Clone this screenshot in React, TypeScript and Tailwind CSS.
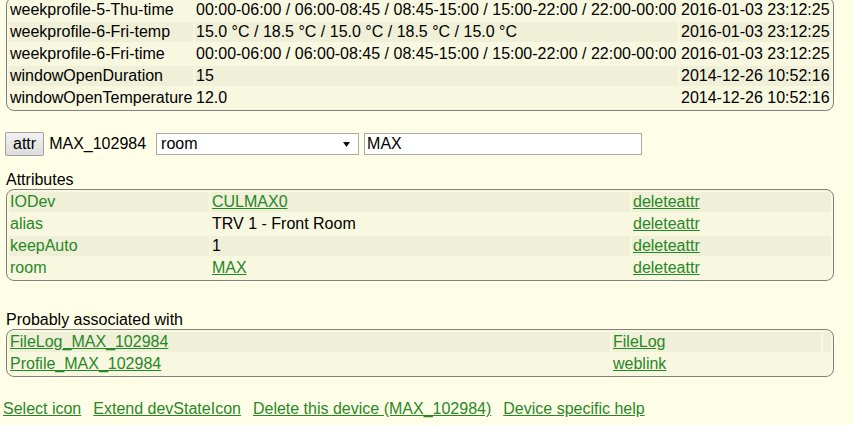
import React from "react";

const font = { fontFamily: '"Liberation Sans", Arial, sans-serif' };

type Cell = { text: string; kind?: "plain" | "link" | "name" };

function Block({
  widths,
  rows,
  darkFirst = true,
}: {
  widths: string[];
  rows: Cell[][];
  darkFirst?: boolean;
}) {
  return (
    <table className="w-[828px] table-fixed border-separate border-spacing-[2px] border border-[#808080] rounded-[8px] bg-[#F8F8E0]">
      <colgroup>
        {widths.map((w, i) => (
          <col key={i} className={w} />
        ))}
      </colgroup>
      <tbody>
        {rows.map((r, i) => {
          const dark = darkFirst ? i % 2 === 0 : i % 2 === 1;
          return (
            <tr key={i}>
              {r.map((c, j) => (
                <td
                  key={j}
                  className={
                    "p-0 pl-[1px] h-[20px] leading-[20px] whitespace-nowrap overflow-hidden align-middle " +
                    (dark ? "bg-[#F0F0D8]" : "")
                  }
                >
                  {c.kind === "link" ? (
                    <a className="text-[#278727] underline cursor-pointer">{c.text}</a>
                  ) : c.kind === "name" ? (
                    <span className="text-[#278727]">{c.text}</span>
                  ) : (
                    <span className="text-black">{c.text}</span>
                  )}
                </td>
              ))}
            </tr>
          );
        })}
      </tbody>
    </table>
  );
}

const wpTime = "00:00-06:00 / 06:00-08:45 / 08:45-15:00 / 15:00-22:00 / 22:00-00:00";
const wpTemp = "15.0 °C / 18.5 °C / 15.0 °C / 18.5 °C / 15.0 °C";

export default function App() {
  const readings: Cell[][] = [
    [{ text: "weekprofile-5-Thu-time" }, { text: wpTime }, { text: "2016-01-03 23:12:25" }],
    [{ text: "weekprofile-6-Fri-temp" }, { text: wpTemp }, { text: "2016-01-03 23:12:25" }],
    [{ text: "weekprofile-6-Fri-time" }, { text: wpTime }, { text: "2016-01-03 23:12:25" }],
    [{ text: "windowOpenDuration" }, { text: "15" }, { text: "2014-12-26 10:52:16" }],
    [{ text: "windowOpenTemperature" }, { text: "12.0" }, { text: "2014-12-26 10:52:16" }],
  ];
  const attrs: Cell[][] = [
    [{ text: "IODev", kind: "name" }, { text: "CULMAX0", kind: "link" }, { text: "deleteattr", kind: "link" }],
    [{ text: "alias", kind: "name" }, { text: "TRV 1 - Front Room" }, { text: "deleteattr", kind: "link" }],
    [{ text: "keepAuto", kind: "name" }, { text: "1" }, { text: "deleteattr", kind: "link" }],
    [{ text: "room", kind: "name" }, { text: "MAX", kind: "link" }, { text: "deleteattr", kind: "link" }],
  ];
  const assoc: Cell[][] = [
    [{ text: "FileLog_MAX_102984", kind: "link" }, { text: "FileLog", kind: "link" }, { text: "" }],
    [{ text: "Profile_MAX_102984", kind: "link" }, { text: "weblink", kind: "link" }, { text: "" }],
  ];

  return (
    <div
      className="w-[854px] h-[425px] overflow-hidden bg-[#FFFFE7] text-[16px] text-black"
      style={font}
    >
      <div className="mt-[-3px] ml-[6px]">
        <Block widths={["w-[184px]", "w-[483px]", "w-[151px]"]} rows={readings} darkFirst={false} />
      </div>

      <div className="mt-[21px] ml-[5px] flex items-center h-[24px]">
        <button className="h-[24px] px-[7px] border border-[#a0a0a0] rounded-[2px] bg-gradient-to-b from-[#f2f2f2] to-[#dcdcdc] text-black leading-[20px]">
          attr
        </button>
        <span className="ml-[5px] leading-[20px]">MAX_102984</span>
        <div className="ml-[10px] w-[203px] h-[22px] bg-white border border-[#a9a9a9] flex items-center justify-between pl-[4px] pr-[8px]">
          <span className="leading-[20px]">room</span>
          <svg width="7" height="5" viewBox="0 0 7 5">
            <polygon points="0,0 7,0 3.5,5" fill="#111" />
          </svg>
        </div>
        <div className="ml-[5px] w-[278px] h-[22px] bg-white border border-[#a9a9a9] flex items-center pl-[2px]">
          <span className="leading-[20px]">MAX</span>
        </div>
      </div>

      <div className="mt-[14px] ml-[6px] leading-[19px]">Attributes</div>
      <div className="ml-[6px]">
        <Block widths={["w-[200px]", "w-[419px]", "w-[199px]"]} rows={attrs} />
      </div>

      <div className="mt-[29px] ml-[6px] leading-[19px]">Probably associated with</div>
      <div className="ml-[6px]">
        <Block widths={["w-[601px]", "w-[209px]", "w-[8px]"]} rows={assoc} />
      </div>

      <div className="mt-[22px] ml-[3px] flex gap-[12px] leading-[19px]">
        <a className="text-[#278727] underline">Select icon</a>
        <a className="text-[#278727] underline">Extend devStateIcon</a>
        <a className="text-[#278727] underline">Delete this device (MAX_102984)</a>
        <a className="text-[#278727] underline">Device specific help</a>
      </div>
    </div>
  );
}
